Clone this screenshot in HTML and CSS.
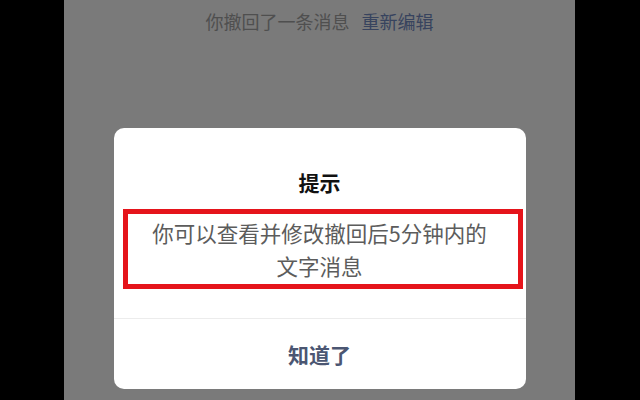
FILE: index.html
```html
<!DOCTYPE html>
<html lang="zh-CN">
<head>
<meta charset="utf-8">
<title>提示</title>
<link rel="stylesheet" href="styles.css">
</head>
<body>
<div class="screen">
  <div class="notice">
    <span class="notice-text">你撤回了一条消息</span>
    <span class="notice-link">重新编辑</span>
  </div>
  <div class="dialog">
    <div class="title">提示</div>
    <div class="content">
      你可以查看并修改撤回后5分钟内的文字消息
      <div class="highlight"></div>
    </div>
    <div class="button">知道了</div>
  </div>
</div>
</body>
</html>
```

FILE: styles.css
```css
* { box-sizing: border-box; }
html, body {
  margin: 0;
  padding: 0;
  width: 640px;
  height: 400px;
  overflow: hidden;
  background: #000;
  font-family: "Noto Sans CJK SC", "Noto Sans", sans-serif;
}
.screen {
  width: 511px;
  height: 400px;
  margin-left: 64px;
  background: #7a7a7a;
  display: flex;
  flex-direction: column;
  align-items: center;
}
.notice {
  margin-top: 9px;
  font-size: 18px;
  line-height: 24px;
  display: flex;
  gap: 12px;
}
.notice-text { color: #4f4f4f; }
.notice-link { color: #37435e; }
.dialog {
  margin-top: 95px;
  width: 412px;
  background: #fff;
  border-radius: 10px;
  display: flex;
  flex-direction: column;
}
.title {
  padding-top: 40px;
  font-size: 21px;
  line-height: 28px;
  font-weight: 700;
  color: #111;
  text-align: center;
}
.content {
  position: relative;
  margin-top: 20px;
  padding: 0 30px 36px;
  font-size: 21.5px;
  line-height: 33px;
  color: #5c5c5c;
  text-align: center;
}
.highlight {
  position: absolute;
  top: -7px;
  height: 80px;
  left: 9px;
  right: 3px;
  border: 5px solid #e5141b;
}
.button {
  border-top: 1px solid #ececec;
  height: 71px;
  line-height: 70px;
  font-size: 21px;
  font-weight: 700;
  color: #4b5672;
  text-align: center;
}
```
